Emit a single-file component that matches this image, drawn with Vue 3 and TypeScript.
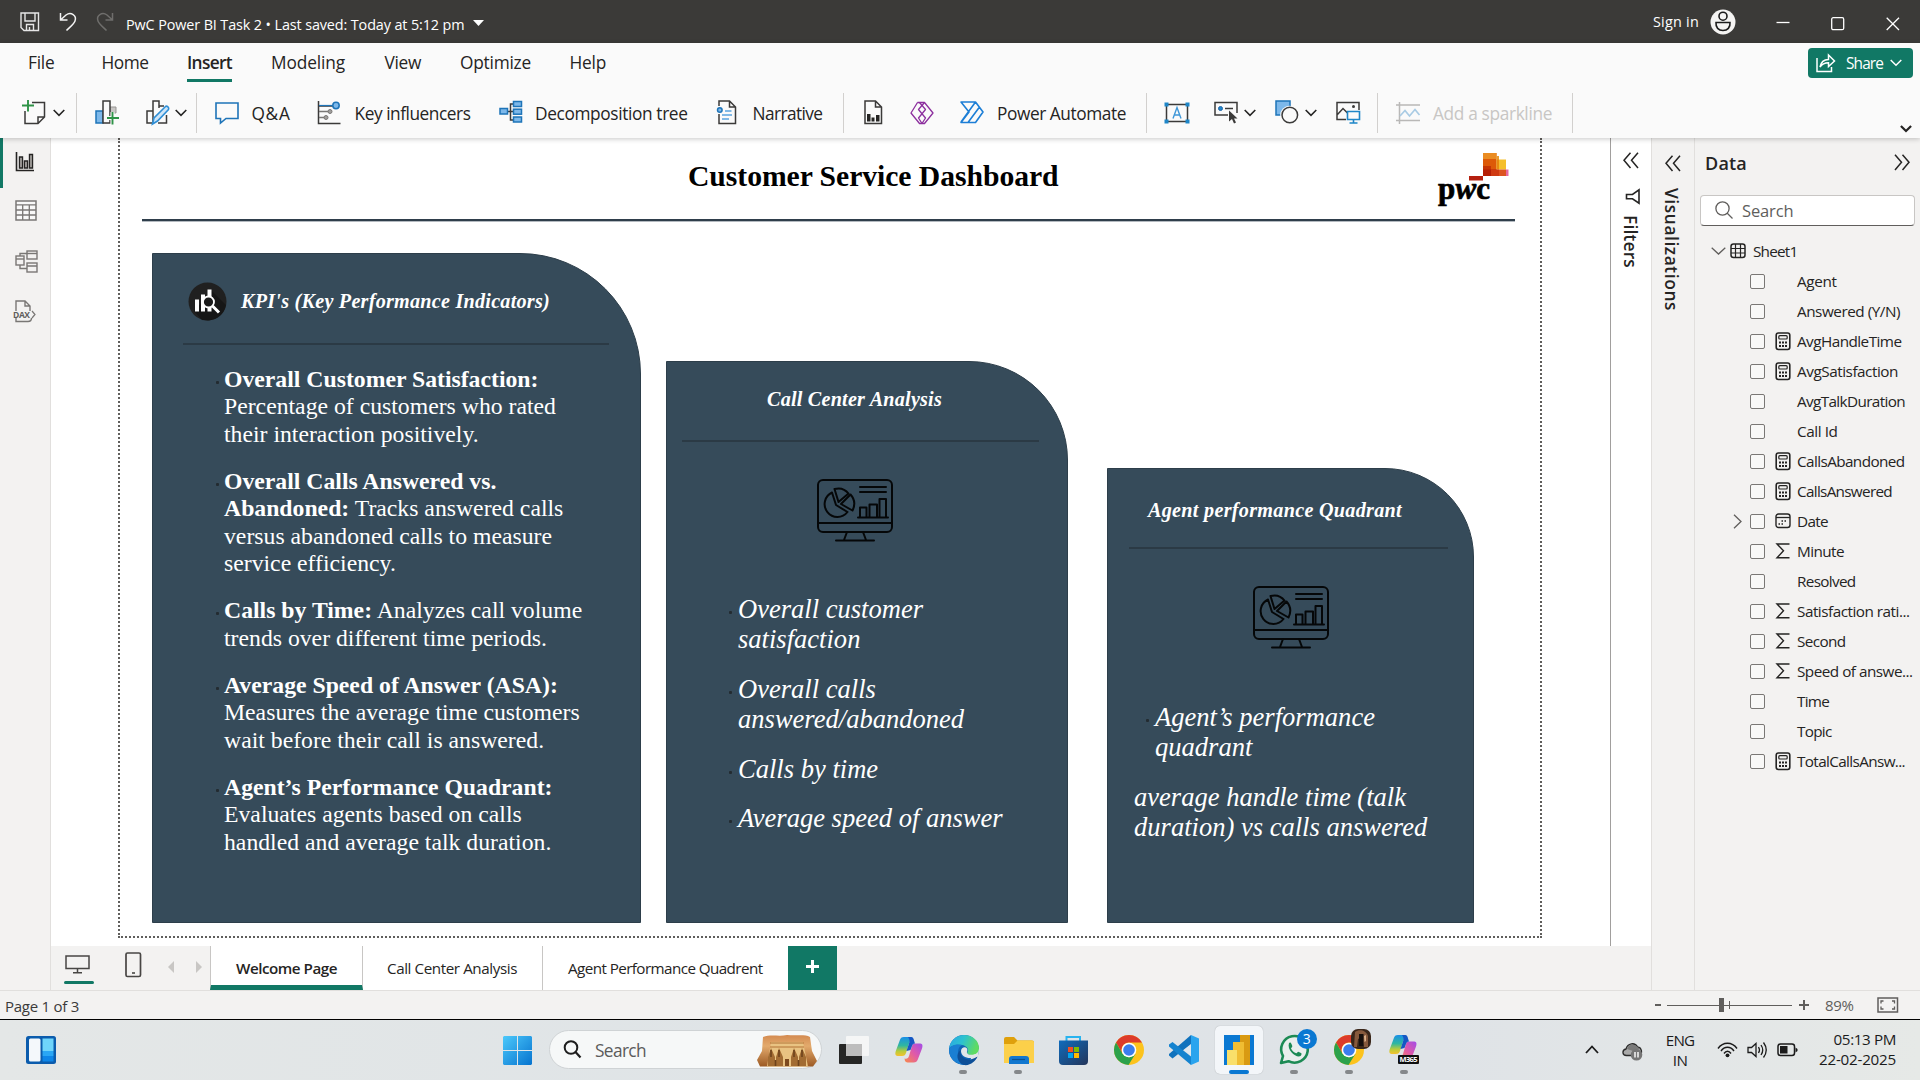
<script setup lang="ts">
import { h } from 'vue'

interface Glyph { w: number; h: number; body: string }
interface Cell { from: number; to: number; icon?: string; text?: string; sep?: boolean; cls?: string }

const line = 'fill="none" stroke="#3b3a39" stroke-width="1.5"'
const blue = 'fill="none" stroke="#1e74b8" stroke-width="1.6"'

const monitor =
  '<g fill="none" stroke="#050708" stroke-width="2" stroke-linecap="round" stroke-linejoin="round"><rect x="1" y="1" width="74" height="52" rx="5"/><path d="M1 44H75M30 53l-3 8M46 53l3 8M19 61.500H57M43 8H69M43 13H69M41 38.500H71M43 38V28.500H49.500V38M52.500 38V25.500H60V38M62.500 38V20H69V38"/><path d="M15 13.500A12.800 12.800 0 1 0 30.500 33L19 26ZM17.500 10C23 8.500 28 10 31.500 14.500L21.500 23ZM33.500 15.500C38 20.500 38 26.500 35.500 31.500L24 25Z"/></g>'

const chrome =
  '<circle cx="15" cy="15" r="15" fill="#fcc31e"/><path d="M2 7.500A15 15 0 0 1 28 7.500H15A7.500 7.500 0 0 0 8.500 18.700Z" fill="#dd3b2b"/><path d="M2 7.500L8.500 18.700 15 22.500 21.500 18.700 14.500 30A15 15 0 0 1 2 7.500Z" fill="#2ba14b"/><circle cx="15" cy="15" r="7.300" fill="#fff"/><circle cx="15" cy="15" r="5.800" fill="#3b7ded"/>'

const copilot =
  '<defs><linearGradient id="cpA" x1="0" y1="0" x2="0" y2="1"><stop offset="0" stop-color="#1a8fe8"/><stop offset=".45" stop-color="#2fb7a0"/><stop offset=".75" stop-color="#b9cc3b"/><stop offset="1" stop-color="#f5c12e"/></linearGradient><linearGradient id="cpB" x1="1" y1="0" x2="0" y2="1"><stop offset="0" stop-color="#a24de8"/><stop offset=".5" stop-color="#e05aa8"/><stop offset="1" stop-color="#f98b4a"/></linearGradient></defs><path d="M18 1.500C17 .3 16 0 14.500 0H9C6.500 0 5.500 1 4.700 3.500L.8 14C-.4 18 .8 19 3.500 19H7C9.500 19 10.300 18 11 16L14 6.500C14.800 4 16 3.500 18.500 4Z" fill="url(#cpA)"/><path d="M10 24C11 25.200 12 25.500 13.500 25.500H18.500C21 25.500 22 24.500 22.800 22.500L27 11.500C28.300 7.500 27 6.500 24.500 6.500H20.500C18 6.500 17.500 7.500 16.800 9.500L14 19C13.200 21.500 12 22 9.500 21.500Z" fill="url(#cpB)"/><path d="M13 0H16C18 0 18.500 1.500 19 3.500L20 6.500C17.800 6.500 17.300 8 16.800 9.500L15.500 13 11.500 14 14 6.500C14.800 4 15 3 13 0Z" fill="#1557c4"/>'

const glyphs: Record<string, Glyph> = {
  save: { w: 20, h: 20, body: '<path d="M1 1H18.500V18.500H4L1 15.500ZM5 1V9H15V1M6.500 18.500V12.500H13.500V18.500M9.500 15V18" fill="none" stroke="#e6e6e6" stroke-width="1.400"/>' },
  undo: { w: 18, h: 20, body: '<path d="M1.500 1V8H8.500M1.500 8L7 3C12 -.5 18 3.500 16 9C15 12 11 15 7.500 18.500" fill="none" stroke="#f3f3f3" stroke-width="1.500"/>' },
  redo: { w: 18, h: 20, body: '<path d="M16.500 1V8H9.500M16.500 8L11 3C6 -.5 0 3.500 2 9C3 12 7 15 10.500 18.500" fill="none" stroke="#6f6e6c" stroke-width="1.500"/>' },
  tri: { w: 12, h: 8, body: '<path d="M0 1H11L5.500 7Z" fill="#fff"/>' },
  avatar: { w: 26, h: 26, body: '<circle cx="13" cy="13" r="12.500" fill="#f5f4f3"/><circle cx="13" cy="7.200" r="4" fill="none" stroke="#1c1c1c" stroke-width="1.600"/><path d="M6 13.500H20C20.500 18.500 17.500 21.500 13 21.500S5.500 18.500 6 13.500Z" fill="none" stroke="#1c1c1c" stroke-width="1.600"/>' },
  min: { w: 14, h: 14, body: '<path d="M.5 5.500H13.500" stroke="#fff" stroke-width="1.300"/>' },
  max: { w: 14, h: 14, body: '<rect x=".7" y=".7" width="12" height="12" rx="1.500" fill="none" stroke="#fff" stroke-width="1.300"/>' },
  close: { w: 14, h: 14, body: '<path d="M.7 .7L13 13M13 .7L.7 13" stroke="#fff" stroke-width="1.300"/>' },
  share: { w: 20, h: 20, body: '<path d="M1 5V18.500H15.500V14M4 14C5 9 8 6.500 12.500 6.500V2L18.500 8 12.500 13.500V9.800C8.500 9.800 6 11 4 14Z" fill="none" stroke="#fff" stroke-width="1.500"/>' },
  chevW: { w: 12, h: 8, body: '<path d="M.7 1L6 6.300 11.300 1" fill="none" stroke="#fff" stroke-width="1.500"/>' },
  chev: { w: 12, h: 8, body: '<path d="M.7 1L6 6.300 11.300 1" fill="none" stroke="#252423" stroke-width="1.600"/>' },
  chevB: { w: 12, h: 8, body: '<path d="M.9 1L6 6 11.100 1" fill="none" stroke="#252423" stroke-width="2.200"/>' },
  newPage: { w: 24, h: 25, body: `<path d="M10 2.500H22.500V17L16 23.500H3V11M16 23.500V17H22.500" ${line}/><path d="M0 5.500H12M6 0V11.500" stroke="#2e9347" stroke-width="1.900"/>` },
  newVisual: { w: 24, h: 25, body: `<rect x="1" y="11" width="7" height="12" fill="#7db8ea" stroke="#1e74b8" stroke-width="1.500"/><path d="M15 7H21V13H15Z" fill="#c8c6c4" stroke="#979593"/><rect x="8" y="1" width="7" height="22" fill="#fafafa" stroke="#3b3a39" stroke-width="1.500"/><path d="M11 18H24M17.500 12V25" stroke="#fafafa" stroke-width="4"/><path d="M12 18H24M17.500 12V24.500" stroke="#2e9347" stroke-width="1.900"/>` },
  editVisual: { w: 24, h: 25, body: `<path d="M7 23H1V11H7V1H13V8M7 11V23M13 6H18M20.500 15V23H12" ${line}/><path d="M6.500 24L8 18 19.500 6.500C21 5.500 23.500 7.500 22.500 9.500L11.500 21Z" fill="#cfe5f7" stroke="#2f8fd6" stroke-width="1.600"/>` },
  qa: { w: 24, h: 23, body: `<path d="M1 2H23V17.500H11L5.500 22V17.500H1Z" ${blue}/>` },
  key: { w: 24, h: 25, body: `<path d="M1.500 1V23.500H23.500M2 6H16" ${line}/><path d="M2 11.500H12M2 17.500H8" stroke="#797775" stroke-width="1.500"/><circle cx="13" cy="11.500" r="2" fill="#a19f9d" stroke="#797775"/><circle cx="9" cy="17.500" r="2" fill="#a19f9d" stroke="#797775"/><path d="M2 5.500H16" stroke="#1e74b8" stroke-width="1.200"/><circle cx="19" cy="5.500" r="3.200" fill="#7db8ea" stroke="#1e74b8" stroke-width="1.500"/>` },
  tree: { w: 24, h: 25, body: '<path d="M8 11.500H14M14 4H11.500V20H14" fill="none" stroke="#3b3a39" stroke-width="1.500"/><g fill="#7db8ea" stroke="#1e74b8" stroke-width="1.500"><rect x="1" y="8.500" width="7.500" height="5.500"/><rect x="14.500" y="1.500" width="8" height="5"/><rect x="14.500" y="9.200" width="8" height="5"/><rect x="14.500" y="17" width="8" height="5"/></g>' },
  narrative: { w: 20, h: 25, body: `<path d="M2 6V1H12.500L18.500 7V23.500H2V14M12.500 1V7H18.500" ${line}/><path d="M8 11H14.500M5 15H15M5 19H12" stroke="#5aa4df" stroke-width="1.500"/><circle cx="2.800" cy="10" r="2.300" fill="#7db8ea" stroke="#1e74b8" stroke-width="1.500"/>` },
  report: { w: 19, h: 25, body: `<path d="M1 1H11.500L17.500 7V23.500H1ZM11.500 1V7H17.500" ${line}/><path d="M3 14H6.500V21.500H3ZM7.500 17.500H10.500V21.500H7.500ZM12 15H15.500V21.500H12Z" fill="#252423"/>` },
  powerApps: { w: 24, h: 24, body: '<g fill="none" stroke="#8c2f9e" stroke-width="1.300" stroke-linejoin="round"><path d="M7.500 1.500H14.500L23 12 14.500 22.500H9.500L1 12 7.500 1.500"/><path d="M9.500 1.500L15.500 8.500 8.500 17 12 22.500M14.500 1.500L8.500 8.500 15.500 17 12 22.500"/></g>' },
  automate: { w: 24, h: 23, body: '<path d="M1 1H15.500L23 11 15.500 21.500H1L9 11ZM15.500 1L1 21M19.500 6L8 21.500M1 1L9 11" fill="none" stroke="#1c7ed6" stroke-width="1.600" stroke-linejoin="round"/>' },
  textbox: { w: 26, h: 22, body: '<rect x="2.500" y="2.500" width="21" height="17" fill="none" stroke="#3b3a39" stroke-width="1.500"/><path d="M9 16.500L13 5.500 17 16.500M10.500 13H15.500" fill="none" stroke="#3f97d8" stroke-width="1.400"/><path d="M.5 .5H4.500V4.500H.5ZM21.500 .5H25.500V4.500H21.500ZM.5 17.500H4.500V21.500H.5ZM21.500 17.500H25.500V21.500H21.500Z" fill="#1e86c8"/>' },
  button: { w: 25, h: 23, body: `<path d="M14 14H1V1.500H23V12" ${line}/><path d="M11 7.500H19" stroke="#3b3a39" stroke-width="1.500"/><circle cx="6.500" cy="7.500" r="2" fill="#1e86c8" stroke="#1e64a8"/><path d="M15 9.500V20.500L18 18 20 22.500 22 21.500 20 17.500H23.500Z" fill="#3b3a39"/>` },
  shapes: { w: 24, h: 25, body: '<rect x="1" y="1" width="14" height="14" fill="#7db8ea" stroke="#1e74b8" stroke-width="1.500"/><circle cx="14.500" cy="15" r="9.300" fill="#fafafa"/><circle cx="14.800" cy="15" r="7.800" fill="#fafafa" stroke="#3b3a39" stroke-width="1.500"/>' },
  image: { w: 25, h: 23, body: `<path d="M10 18.500H1V1.500H23V9M1 14L7 7.500 11.500 12" ${line}/><circle cx="17.500" cy="5.500" r="1.500" fill="#3b3a39"/><path d="M11.500 10.500H23.500V18.500H11.500ZM17.500 18.500V22M13.500 22H21.500" fill="#fafafa" stroke="#1e86c8" stroke-width="1.600"/>` },
  spark: { w: 24, h: 22, body: '<path d="M0 3H24M0 18.500H24M3.500 0V22" stroke="#b9b8b7" stroke-width="1.500"/><path d="M4 14L9 8.500 13.500 14 19 7.500 23.500 13" fill="none" stroke="#a9cbe4" stroke-width="1.700"/>' },
  railReport: { w: 20, h: 20, body: '<path d="M1.500 0V18.500H19" fill="none" stroke="#252423" stroke-width="1.600"/><path d="M4.500 5H7.500V16H4.500ZM9.500 9H12.500V16H9.500ZM14.500 2.500H17.500V16H14.500Z" fill="#b3b0ad" stroke="#252423" stroke-width="1.400"/>' },
  railTable: { w: 22, h: 21, body: '<rect x="1" y="1" width="20" height="19" fill="#f8f8f8" stroke="#797775" stroke-width="1.500"/><path d="M1 4.800H21M1 10H21M1 15H21M7.700 5V20M14.300 5V20" stroke="#797775" stroke-width="1.300"/>' },
  railModel: { w: 23, h: 23, body: '<g fill="none" stroke="#797775" stroke-width="1.400"><rect x="12" y="1" width="10" height="8"/><path d="M12 3.500H22"/><rect x="1" y="6" width="8" height="9"/><path d="M1 9H9"/><rect x="12" y="13" width="10" height="9"/><path d="M12 16H22M5 6V3.500H12M5 15V18.500H12"/></g>' },
  railDax: { w: 24, h: 23, body: '<path d="M3 11V1H12L17 6V11M12 1V6H17M3 18V21.500H15C17.500 21.500 18.500 20 18.500 18" fill="none" stroke="#797775" stroke-width="1.400"/><text x="0" y="17.500" font-family="Open Sans,sans-serif" font-size="8.500" font-weight="700" fill="#605e5c" textLength="17">DAX</text><path d="M19 11L22 14.500 19 18" fill="none" stroke="#797775" stroke-width="1.200"/>' },
  kpi: { w: 39, h: 39, body: '<circle cx="19.500" cy="19.500" r="19" fill="#202020"/><path d="M6 29L24 9 38 23A19 19 0 0 1 21 38.500L14 38Z" fill="#161616"/><path d="M7 17.500H11V29.500H7ZM13 12.500H17V29.500H13ZM19.500 7.500H23.500V29.500H19.500Z" fill="#fff"/><circle cx="20.500" cy="20" r="5.500" fill="#1a1a1a" stroke="#fff" stroke-width="1.800"/><path d="M24.500 24L31 30.500" stroke="#fff" stroke-width="3"/>' },
  monitor: { w: 76, h: 63, body: monitor },
  dblL: { w: 16, h: 17, body: '<path d="M7.500 .8L1 8.300 7.500 16M15 .8L8.500 8.300 15 16" fill="none" stroke="#252423" stroke-width="1.500"/>' },
  dblR: { w: 16, h: 17, body: '<path d="M1 .8L7.500 8.300 1 16M8.500 .8L15 8.300 8.500 16" fill="none" stroke="#252423" stroke-width="1.500"/>' },
  funnel: { w: 15, h: 15, body: '<path d="M14 .8V14.200L7.500 9.800H1.500V5.500H7.500Z" fill="none" stroke="#252423" stroke-width="1.600"/>' },
  search: { w: 18, h: 18, body: '<circle cx="7.500" cy="7.500" r="6.600" fill="none" stroke="#605e5c" stroke-width="1.300"/><path d="M12 12L17.500 17.500" stroke="#605e5c" stroke-width="1.300"/>' },
  caretD: { w: 15, h: 8, body: '<path d="M.7 .8L7.500 7 14.300 .8" fill="none" stroke="#605e5c" stroke-width="1.300"/>' },
  caretR: { w: 9, h: 15, body: '<path d="M1 .7L8 7.500 1 14.300" fill="none" stroke="#605e5c" stroke-width="1.300"/>' },
  sheet: { w: 16, h: 16, body: '<rect x="1" y="1" width="14" height="13.500" rx="2.500" fill="none" stroke="#252423" stroke-width="1.500"/><path d="M5.500 1V14.500M10.500 1V14.500M1 5.500H15M1 10H15" stroke="#252423" stroke-width="1.200"/>' },
  calc: { w: 16, h: 19, body: '<rect x="1.200" y="1" width="13.600" height="16.500" rx="2.200" fill="none" stroke="#252423" stroke-width="1.600"/><rect x="3.800" y="3.700" width="8.400" height="3.300" rx="1" fill="none" stroke="#252423" stroke-width="1.200"/><path d="M4 10.500H6M7 10.500H9M10 10.500H12M4 14H6M7 14H9M10 14H12" stroke="#252423" stroke-width="2"/>' },
  cal: { w: 16, h: 16, body: '<rect x="1" y="1" width="14" height="13.500" rx="2.500" fill="none" stroke="#252423" stroke-width="1.400"/><path d="M1 4.500H15" stroke="#252423" stroke-width="1.300"/><path d="M6.500 8H8M9.500 8H11M3.500 11H5M6.500 11H8" stroke="#252423" stroke-width="1.500"/>' },
  sigma: { w: 16, h: 16, body: '<path d="M14.500 1H2L8.500 7.800 2 14.800H14.500" fill="none" stroke="#252423" stroke-width="1.400"/>' },
  desktop: { w: 25, h: 19, body: '<path d="M1 1H24V13.500H1ZM12.500 13.500V17.500M8 17.700H17" fill="none" stroke="#484644" stroke-width="1.500"/>' },
  phone: { w: 17, h: 26, body: '<rect x="1" y="1" width="14.500" height="23.500" rx="1.500" fill="none" stroke="#484644" stroke-width="1.700"/><path d="M7 21H10" stroke="#484644" stroke-width="1.600"/>' },
  left: { w: 6, h: 12, body: '<path d="M6 0V12L0 6Z" fill="#c8c6c4"/>' },
  right: { w: 6, h: 12, body: '<path d="M0 0V12L6 6Z" fill="#c8c6c4"/>' },
  fitPage: { w: 22, h: 16, body: '<rect x="1" y="1" width="19.500" height="14" fill="none" stroke="#605e5c" stroke-width="1.500"/><path d="M4 6.500V4H6.500M15 4H17.500V6.500M17.500 9.500V12H15M6.500 12H4V9.500" fill="none" stroke="#605e5c" stroke-width="1.300"/>' },
  widgets: { w: 30, h: 28, body: '<rect width="30" height="28" rx="2.500" fill="#0b5cad"/><rect x="3" y="2.500" width="11.500" height="23" rx="1.500" fill="#f4f8fb"/><rect x="16.500" y="2.500" width="11" height="12.500" fill="#6fd5fb"/><rect x="16.500" y="15" width="11" height="5" fill="#2aa7f5"/><rect x="16.500" y="20" width="11" height="5.500" fill="#0e86e8"/>' },
  windows: { w: 29, h: 29, body: '<defs><linearGradient id="wn" x1="0" y1="0" x2="1" y2="1"><stop offset="0" stop-color="#4cc9fb"/><stop offset="1" stop-color="#0673cf"/></linearGradient></defs><path d="M1 0H14V14H0V1ZM15 0H28L29 1V14H15ZM0 15H14V29H1L0 28ZM15 15H29V28L28 29H15Z" fill="url(#wn)"/>' },
  taskSearch: { w: 19, h: 19, body: '<circle cx="8" cy="7.500" r="6.300" fill="none" stroke="#1e1e1e" stroke-width="2"/><path d="M12.500 12L17.500 17.500" stroke="#1e1e1e" stroke-width="2.200"/>' },
  temple: { w: 60, h: 32, body: '<defs><linearGradient id="tm" x1="0" y1="0" x2="0" y2="1"><stop offset="0" stop-color="#d38a50"/><stop offset=".35" stop-color="#e3aa6c"/><stop offset="1" stop-color="#9c5a24"/></linearGradient></defs><path d="M6 2C14-1 22 2 30 0 40 1 48-1 53 2L55 16 60 26 56 31.500H3L0 25 5 16Z" fill="url(#tm)"/><path d="M14 7H46L51 31.500H10Z" fill="#e9c382"/><path d="M13 8H47M13 12H47" stroke="#b27337" stroke-width="1"/><path d="M11 31V22L14 13 18 22V31ZM19 31V22L22 13 26 22V31ZM34 31V22L37 13 41 22V31ZM42 31V22L45 13 49 22V31Z" fill="#a26c33"/><path d="M14 15V22M22 15V22M37 15V22M45 15V22M18.500 25V31M41.500 25V31" stroke="#6d431c" stroke-width="1.600"/><path d="M28 24H32V31H28Z" fill="#7d4a1e"/>' },
  taskView: { w: 30, h: 28, body: '<rect y="8" width="23" height="20" rx="1" fill="#262625"/><rect x="7" width="23" height="20" rx="1" fill="#f7f7f7" opacity=".9"/><path d="M7 8H23V20H7Z" fill="#bdbdbd"/>' },
  copilot: { w: 28, h: 26, body: copilot },
  edge: { w: 30, h: 30, body: '<defs><linearGradient id="eg" x1="0" y1="0" x2="1" y2=".3"><stop offset="0" stop-color="#2aa5e6"/><stop offset=".5" stop-color="#2dc2cf"/><stop offset="1" stop-color="#5fdb62"/></linearGradient></defs><circle cx="15" cy="15" r="15" fill="#0f64b5"/><path d="M15 30C22 31 27 26 29.500 20.500L30 14 24 16 20 30Z" fill="#e1e5e9"/><path d="M0 14C1 5 8 0 15 0 24 0 30 6 30 13C30 17.500 26.500 20 22.500 20 19 20 17.500 18.500 18.500 17 20 14 17.500 10.500 13 10 7 9 1 11 0 14Z" fill="url(#eg)"/><path d="M0 14C3 9 9 9 13 10 9 12 8 17 10 22 12 26 17 29 21 28.500A15 15 0 0 1 0 14Z" fill="#1a7fd3"/><path d="M12 15C10 20 15 25 21 24.500 24 24.500 27 22 28.500 21.500 27 26 21 31 15 30 8 28 6 18 12 15Z" fill="#0d4f98"/><path d="M12 16C12 13 16 11 18 13.500 19 15.500 17.500 16.500 18 18 19 20 23 20.300 26 19.300L28.500 18.500 28.800 21C22 25 12 23 12 16Z" fill="#e1e5e9"/>' },
  folder: { w: 30, h: 27, body: '<path d="M0 2Q0 0 2 0H10L13.500 3.500H28Q30 3.500 30 5.500V10H0Z" fill="#dfa00c"/><path d="M0 7H10L13.500 3.500H28Q30 3.500 30 5.500V26H0Z" fill="#fcd04a"/><path d="M5 27V22Q5 19 8 19H22Q25 19 25 22V27Z" fill="#1277cf"/><path d="M8 22.500H21" stroke="#0b508f" stroke-width="1.200"/>' },
  store: { w: 29, h: 29, body: '<defs><linearGradient id="st" x1="0" y1="0" x2="1" y2="1"><stop offset="0" stop-color="#0f6cbd"/><stop offset="1" stop-color="#24355a"/></linearGradient></defs><path d="M7.500 6V1H21V6" fill="none" stroke="#28b3ef" stroke-width="2"/><path d="M0 4.500H29V25Q29 29 25 29H4Q0 29 0 25Z" fill="url(#st)"/><path d="M9 11H14V16H9Z" fill="#f25022"/><path d="M15 11H20V16H15Z" fill="#7fba00"/><path d="M9 17H14V22H9Z" fill="#00a4ef"/><path d="M15 17H20V22H15Z" fill="#ffb900"/>' },
  chrome: { w: 30, h: 30, body: chrome },
  vscode: { w: 30, h: 30, body: '<path d="M22 0L30 3.500V26.500L22 30Z" fill="#2aa4ee"/><path d="M22 0V9L3.500 23.500 0 20.500V19Z" fill="#1072bd"/><path d="M22 30V21.500L3.500 7 0 9.500V11.500Z" fill="#1583cf"/><path d="M22 9.500L15 15 22 20.500Z" fill="#dfe7ee"/>' },
  powerbi: { w: 30, h: 30, body: '<rect width="30" height="30" fill="#0a78d2"/><path d="M16 0H26V30H16Z" fill="#d99a12"/><path d="M9 7H20V30H9Z" fill="#f0bd32"/><path d="M3 15H13V30H3Z" fill="#f9df6a"/>' },
  whatsapp: { w: 30, h: 30, body: '<path d="M2 28L4 21A13.300 13.300 0 1 1 9.500 26.200Z" fill="#e9eeec" stroke="#1c8a54" stroke-width="2.600" stroke-linejoin="round"/><path d="M10 8C11 7 12 7.500 12.500 9L13.300 11C13.500 12 12 13 12 13.500 13 15.800 15 17.500 17.200 18.300 18 18.500 18.500 16.800 19.300 16.700L22 18C23 18.600 22.500 20 21.500 21 18 23.500 7.500 16 10 8Z" fill="#1c8a54"/>' },
  photo: { w: 20, h: 20, body: '<rect width="20" height="20" rx="7" fill="#3a271b"/><path d="M4 3C8 0 15 1 17 7V18H13L11 8 7 10 6 18H3Z" fill="#86593c"/><path d="M8 5H12.500V17H8Z" fill="#17100d"/><path d="M13 7L15 6V12L13.500 13Z" fill="#ddb189"/>' },
  m365: { w: 30, h: 30, body: copilot + '<rect x="9" y="20" width="21" height="9" rx="1" fill="#101010"/><text x="10.500" y="27.300" font-family="Open Sans,sans-serif" font-weight="700" font-size="7.500" fill="#fff" textLength="18">M365</text>' },
  up: { w: 14, h: 9, body: '<path d="M1 8L7 1.500 13 8" fill="none" stroke="#1b1b1b" stroke-width="1.800"/>' },
  cloud: { w: 21, h: 19, body: '<path d="M4.500 13.500C0 13.500-.3 8 4 7 5.500 1 13 0 15.500 5 20 5.500 21 12 17 13.500Z" fill="#a9a9a9" stroke="#2c2c2c" stroke-width="1.300"/><path d="M5 7C6 2 12 1 15.500 5L18 7 11 9Z" fill="#7a7a7a"/><circle cx="14.500" cy="12.800" r="5.800" fill="#757575"/><path d="M13 10V15.500M16 10V15.500" stroke="#fff" stroke-width="1.400"/>' },
  wifi: { w: 21, h: 16, body: '<g fill="none" stroke="#1b1b1b" stroke-width="1.400"><path d="M1 6.500C6-.5 15-.5 20 6.500M4 9C7.500 4 13.500 4 17 9M7 11.500C9 8.500 12 8.500 14 11.500"/></g><circle cx="10.500" cy="13.300" r="1.900" fill="#1b1b1b"/>' },
  sound: { w: 21, h: 18, body: '<path d="M1 6.500H4.500L9 2.500V15.500L4.500 11.500H1ZM11.500 6Q13.500 9 11.500 12M14 4Q17.500 9 14 14M16.500 1.500Q22 9 16.500 16.500" fill="none" stroke="#1b1b1b" stroke-width="1.300"/>' },
  battery: { w: 21, h: 14, body: '<rect x="1" y="1" width="16.500" height="11.500" rx="2.500" fill="none" stroke="#1b1b1b" stroke-width="1.500"/><rect x="3" y="3" width="7.500" height="7.500" fill="#1b1b1b"/><path d="M18.500 4.500L20.500 6V8L18.500 9.500Z" fill="#1b1b1b"/>' },
}

const Ico = (p: { n: string }) => {
  const g = glyphs[p.n]
  return h('svg', { width: g.w, height: g.h, viewBox: `0 0 ${g.w} ${g.h}`, innerHTML: g.body, style: 'display:block;flex:none;overflow:visible' })
}
Ico.props = ['n']

/* Tracks a label so that it takes exactly the given length. */
const vFit = {
  mounted(el: HTMLElement, b: { value: number; modifiers: { down?: boolean } }) {
    const n = (el.textContent ?? '').trim().length
    const range = document.createRange()
    range.selectNodeContents(el)
    const r = range.getBoundingClientRect()
    el.style.letterSpacing = `${(b.value - (b.modifiers.down ? r.height : r.width)) / n}px`
  },
}

/* Turns the extents of a row's cells into the gap before each and its width. */
const spread = (cells: Cell[], start = 0) => {
  let at = start
  return cells.map((c) => {
    const gap = c.from - at
    at = c.to
    return { ...c, w: c.to - c.from, box: { marginLeft: `${gap}px`, width: `${c.to - c.from}px` } }
  })
}

const menu = spread([
  { from: 28, to: 54.5, text: 'File' },
  { from: 101.5, to: 148.5, text: 'Home' },
  { from: 187, to: 232, text: 'Insert', cls: 'on' },
  { from: 271, to: 345, text: 'Modeling' },
  { from: 384.5, to: 421, text: 'View' },
  { from: 460, to: 531, text: 'Optimize' },
  { from: 569.5, to: 606, text: 'Help' },
])

const ribbon = spread([
  { from: 22, to: 46, icon: 'newPage' }, { from: 53, to: 65, icon: 'chev' }, { from: 76, to: 77, sep: true },
  { from: 95, to: 119, icon: 'newVisual' }, { from: 146, to: 170, icon: 'editVisual' }, { from: 175, to: 187, icon: 'chev' },
  { from: 196, to: 197, sep: true },
  { from: 215, to: 239, icon: 'qa' }, { from: 251.5, to: 290.5, text: 'Q&A' },
  { from: 317, to: 341, icon: 'key' }, { from: 354.5, to: 470.5, text: 'Key influencers' },
  { from: 499, to: 523, icon: 'tree' }, { from: 535, to: 687.5, text: 'Decomposition tree' },
  { from: 717, to: 737, icon: 'narrative' }, { from: 752.5, to: 822.5, text: 'Narrative' },
  { from: 843, to: 844, sep: true },
  { from: 864, to: 883, icon: 'report' }, { from: 910, to: 934, icon: 'powerApps' },
  { from: 960, to: 984, icon: 'automate' }, { from: 997, to: 1126, text: 'Power Automate' },
  { from: 1146, to: 1147, sep: true },
  { from: 1163.5, to: 1189.5, icon: 'textbox' }, { from: 1214, to: 1239, icon: 'button' }, { from: 1244, to: 1256, icon: 'chev' },
  { from: 1275, to: 1299, icon: 'shapes' }, { from: 1305, to: 1317, icon: 'chev' }, { from: 1336, to: 1361, icon: 'image' },
  { from: 1377, to: 1378, sep: true },
  { from: 1396, to: 1420, icon: 'spark' }, { from: 1433, to: 1552, text: 'Add a sparkline', cls: 'dim' },
  { from: 1572, to: 1573, sep: true }, { from: 1900, to: 1912, icon: 'chevB', cls: 'low' },
])

const kpiItems: string[][][] = [
  [['Overall Customer Satisfaction:'], ['', 'Percentage of customers who rated'], ['', 'their interaction positively.']],
  [['Overall Calls Answered vs.'], ['Abandoned:', ' Tracks answered calls'], ['', 'versus abandoned calls to measure'], ['', 'service efficiency.']],
  [['Calls by Time:', ' Analyzes call volume'], ['', 'trends over different time periods.']],
  [['Average Speed of Answer (ASA):'], ['', 'Measures the average time customers'], ['', 'wait before their call is answered.']],
  [['Agent’s Performance Quadrant:'], ['', 'Evaluates agents based on calls'], ['', 'handled and average talk duration.']],
]
const callItems = [['Overall customer', 'satisfaction'], ['Overall calls', 'answered/abandoned'], ['Calls by time'], ['Average speed of answer']]

const fields: { name: string; w: number; icon?: string; open?: boolean }[] = [
  { name: 'Agent', w: 39.5 }, { name: 'Answered (Y/N)', w: 103 }, { name: 'AvgHandleTime', w: 104.5, icon: 'calc' },
  { name: 'AvgSatisfaction', w: 101, icon: 'calc' }, { name: 'AvgTalkDuration', w: 108 }, { name: 'Call Id', w: 40.5 },
  { name: 'CallsAbandoned', w: 107.5, icon: 'calc' }, { name: 'CallsAnswered', w: 95, icon: 'calc' },
  { name: 'Date', w: 31, icon: 'cal', open: true }, { name: 'Minute', w: 47, icon: 'sigma' }, { name: 'Resolved', w: 58.5 },
  { name: 'Satisfaction rati...', w: 112.5, icon: 'sigma' }, { name: 'Second', w: 48.5, icon: 'sigma' },
  { name: 'Speed of answe...', w: 115.5, icon: 'sigma' }, { name: 'Time', w: 32 }, { name: 'Topic', w: 34.5 },
  { name: 'TotalCallsAnsw...', w: 108, icon: 'calc' },
]

const apps: { icon: string; run?: string; badge?: string; face?: boolean }[] = [
  { icon: 'taskView' }, { icon: 'copilot' }, { icon: 'edge', run: 'idle' }, { icon: 'folder', run: 'idle' }, { icon: 'store' },
  { icon: 'chrome' }, { icon: 'vscode' }, { icon: 'powerbi', run: 'front' }, { icon: 'whatsapp', run: 'idle', badge: '3' },
  { icon: 'chrome', run: 'idle', face: true }, { icon: 'm365', run: 'idle' },
]
</script>

<template>
  <div class="screen">
    <header class="titlebar">
      <Ico n="save" class="t-save" /><Ico n="undo" class="t-undo" /><Ico n="redo" class="t-redo" />
      <span class="doc" v-fit="338.5">PwC Power BI Task 2 • Last saved: Today at 5:12 pm</span>
      <Ico n="tri" class="t-tri" />
      <div class="account"><span v-fit="46">Sign in</span><Ico n="avatar" /></div>
      <div class="win"><Ico n="min" /><Ico n="max" /><Ico n="close" /></div>
    </header>

    <section class="top">
      <nav class="menu">
        <span v-for="m in menu" :key="m.text" class="tab" :class="m.cls" :style="m.box"><span v-fit="m.w">{{ m.text }}</span></span>
        <button class="share"><Ico n="share" /><span v-fit="37">Share</span><Ico n="chevW" /></button>
      </nav>
      <div class="ribbon">
        <div v-for="(c, i) in ribbon" :key="i" class="cell" :class="[c.cls, { sep: c.sep, lbl: c.text }]" :style="c.box">
          <Ico v-if="c.icon" :n="c.icon" /><span v-else-if="c.text" v-fit="c.w">{{ c.text }}</span>
        </div>
      </div>
    </section>

    <main class="work">
      <aside class="rail">
        <div class="slot on"><Ico n="railReport" /></div>
        <div class="slot"><Ico n="railTable" /></div>
        <div class="slot"><Ico n="railModel" /></div>
        <div class="slot dax"><Ico n="railDax" /></div>
      </aside>

      <div class="center">
        <div class="upper">
          <div class="canvas">
            <div class="page">
              <div class="head">
                <h1><span v-fit="370.5">Customer Service Dashboard</span></h1>
                <div class="logo">
                  <svg width="41" height="28" viewBox="0 0 41 28">
                    <path d="M0 23H14V27.500H0Z" fill="#b5200f" /><path d="M14 0H27.500V23H14Z" fill="#dd5a08" />
                    <path d="M14 0H27.500V6H14Z" fill="#ea8c22" /><path d="M27.500 3H30V16.500H27.500Z" fill="#eb9b2f" />
                    <path d="M30 6.500H37V16.500H30Z" fill="#f5bf2b" /><path d="M27.500 6.500H30V16.500H27.500Z" fill="#e88a10" />
                    <path d="M14 13H22V23H14Z" fill="#c53505" /><path d="M14 16.500H27.500V23H14Z" fill="#b51e05" />
                    <path d="M22 16.500H30V23H22Z" fill="#cf3a12" /><path d="M30 16.500H37V23H30Z" fill="#dc5320" />
                    <path d="M37 16.500H39.500V23H37Z" fill="#e668a0" />
                  </svg>
                  <span class="word">p<i>w</i>c</span>
                </div>
              </div>
              <div class="rule"></div>
              <div class="cards">
                <article class="card c1">
                  <div class="chead"><Ico n="kpi" /><span v-fit="309">KPI's (Key Performance Indicators)</span></div>
                  <div class="crule"></div>
                  <ul class="body">
                    <li v-for="(it, i) in kpiItems" :key="i">
                      <div v-for="(l, j) in it" :key="j" class="ln"><b>{{ l[0] }}</b>{{ l[1] }}</div>
                    </li>
                  </ul>
                </article>
                <article class="card c2">
                  <div class="chead"><span v-fit="175">Call Center Analysis</span></div>
                  <div class="crule"></div>
                  <Ico n="monitor" class="mon" />
                  <ul class="body it">
                    <li v-for="(it, i) in callItems" :key="i"><div v-for="l in it" :key="l" class="ln">{{ l }}</div></li>
                  </ul>
                </article>
                <article class="card c3">
                  <div class="chead"><span v-fit="254">Agent performance Quadrant</span></div>
                  <div class="crule"></div>
                  <Ico n="monitor" class="mon" />
                  <ul class="body it">
                    <li><div class="ln">Agent’s performance</div><div class="ln">quadrant</div></li>
                  </ul>
                  <div class="para"><div class="ln">average handle time (talk</div><div class="ln">duration) vs calls answered</div></div>
                </article>
              </div>
            </div>
          </div>
          <aside class="filters"><Ico n="dblL" /><Ico n="funnel" class="fun" /><span class="vert" v-fit.down="53">Filters</span></aside>
        </div>
        <footer class="tabs">
          <div class="mode"><Ico n="desktop" /><i class="bar"></i></div>
          <Ico n="phone" class="ph" /><Ico n="left" class="la" /><Ico n="right" class="ra" />
          <div class="pg p1"><span v-fit="101">Welcome Page</span></div>
          <div class="pg p2"><span v-fit="130">Call Center Analysis</span></div>
          <div class="pg p3"><span v-fit="194.5">Agent Performance Quadrent</span></div>
          <div class="add"></div>
        </footer>
      </div>

      <aside class="viz"><Ico n="dblL" /><span class="vert" v-fit.down="123">Visualizations</span></aside>

      <aside class="data">
        <div class="dhead"><b v-fit="42">Data</b><Ico n="dblR" /></div>
        <div class="find"><Ico n="search" /><span v-fit="51.5">Search</span></div>
        <div class="row root"><Ico n="caretD" /><Ico n="sheet" /><span v-fit="44.500">Sheet1</span></div>
        <div v-for="f in fields" :key="f.name" class="row">
          <div class="exp"><Ico v-if="f.open" n="caretR" /></div>
          <i class="box"></i>
          <div class="kind"><Ico v-if="f.icon" :n="f.icon" /></div>
          <span v-fit="f.w">{{ f.name }}</span>
        </div>
      </aside>
    </main>

    <div class="status">
      <span class="count" v-fit="74">Page 1 of 3</span>
      <div class="zoom">
        <i class="minus"></i>
        <div class="track"><i class="thumb"></i><i class="tick"></i></div>
        <i class="plus"></i>
        <span v-fit="28.500">89%</span><Ico n="fitPage" />
      </div>
    </div>

    <div class="taskbar">
      <Ico n="widgets" class="wid" /><Ico n="windows" class="start" />
      <div class="pill"><Ico n="taskSearch" /><span v-fit="51">Search</span><Ico n="temple" class="tem" /></div>
      <div class="apps">
        <div v-for="(a, i) in apps" :key="i" class="app" :class="a.run">
          <Ico :n="a.icon" />
          <span v-if="a.badge" class="badge">{{ a.badge }}</span>
          <Ico v-if="a.face" n="photo" class="face" />
        </div>
      </div>
      <div class="tray">
        <Ico n="up" /><Ico n="cloud" class="cl" />
        <div class="lang"><span v-fit="28.500">ENG</span><span v-fit="14.500">IN</span></div>
        <Ico n="wifi" class="wf" /><Ico n="sound" class="sd" /><Ico n="battery" class="bt" />
        <div class="clock"><span v-fit="62.500">05:13 PM</span><span v-fit="77">22-02-2025</span></div>
      </div>
    </div>
  </div>
</template>

<style>
body { margin: 0; overflow: hidden; }
</style>

<style scoped>
* { box-sizing: border-box; }
.screen { width: 1920px; height: 1080px; display: flex; flex-direction: column; background: #fff; color: #252423; font-family: "Open Sans", "Noto Sans", sans-serif; overflow: hidden; }
span, b { white-space: nowrap; }
i { font-style: normal; }

.titlebar { height: 43px; background: #3b3a38; color: #fff; display: flex; font-size: 14.400px; flex: none; }
.t-save { margin: 12px 0 0 20px; }
.t-undo { margin: 12px 0 0 19px; }
.t-redo { margin: 12px 0 0 19px; }
.doc { align-self: flex-start; line-height: 20px; margin: 15px 0 0 12px; flex: none; }
.t-tri { margin: 19px 0 0 8px; }
.account { margin-left: auto; display: flex; align-items: center; gap: 11px; height: 43px; }
.account span { display: block; width: 46px; }
.win { display: flex; gap: 41px; margin: 17px 20px 0 40px; }

.top { height: 95px; background: #fafafa; flex: none; position: relative; box-shadow: 0 1px 5px rgba(0, 0, 0, .22); z-index: 2; font-size: 17.300px; }
.menu { height: 42px; display: flex; align-items: flex-start; }
.tab { display: block; height: 39px; line-height: 39px; flex: none; }
.on.tab { font-weight: 600; border-bottom: 3px solid #117865; }
.share { margin: 5px 7px 0 auto; width: 105px; height: 30px; border: 0; border-radius: 4px; background: #117865; color: #fff; display: flex; align-items: center; padding: 0 8px; font: 15.400px "Open Sans", sans-serif; }
.share span { width: 38px; margin: 0 6px 0 10px; flex: none; text-align: left; }
.ribbon { height: 53px; display: flex; align-items: center; }
.cell { flex: none; height: 25px; display: flex; align-items: center; margin-top: 2px; }
.cell.lbl { line-height: 25px; margin-top: 4px; }
.cell.sep { height: 40px; background: #d2d0ce; margin-top: 3px; }
.cell.dim { color: #c8c6c4; }
.cell.low { margin-top: 34px; }

.work { height: 852px; display: flex; flex: none; }
.rail { width: 51px; background: #f3f2f1; border-right: 1px solid #e1dfdd; flex: none; }
.slot { height: 50px; display: flex; align-items: center; padding-left: 15px; }
.slot.on { border-left: 3px solid #117865; padding-left: 12px; padding-bottom: 3px; }
.slot.dax { padding-left: 13px; }
.slot:nth-child(2) { height: 45px; }
.slot:nth-child(3) { height: 56px; }
.slot:nth-child(4) { height: 44px; }

.center { width: 1600px; flex: none; display: flex; flex-direction: column; }
.upper { height: 808px; display: flex; }
.canvas { width: 1559px; padding-left: 67px; flex: none; }
.page { width: 1424px; height: 800px; border: dotted #605e5c; border-width: 0 2px 2px; font-family: "Liberation Serif", "Times New Roman", serif; }
.head { height: 81px; display: flex; color: #000; }
h1 { margin: 21px 0 0 568px; font-size: 29.660px; line-height: 34px; font-weight: 700; }
.logo { margin: 15px 31px 0 auto; width: 71px; height: 60px; display: flex; flex-direction: column; }
.logo svg { margin-left: 31px; flex: none; }
.word { font-size: 31px; font-weight: 700; line-height: 24px; margin-top: -4px; letter-spacing: .2px; -webkit-text-stroke: .7px #000; }
.word i { font-style: italic; }
.rule { width: 1373px; height: 3px; margin-left: 22px; background: #2f3e4b; border-bottom: 1px solid #b4bac0; }
.cards { height: 701px; display: flex; align-items: flex-end; padding-left: 32px; }
.card { background: #364b5a; border: 1px solid #2d3e4a; color: #fff; flex: none; }
.c1 { width: 489px; height: 670px; border-top-right-radius: 121px; }
.c2 { width: 402px; height: 562px; border-top-right-radius: 99px; margin-left: 25px; }
.c3 { width: 367px; height: 455px; border-top-right-radius: 89px; margin-left: 39px; }
.chead { font-size: 20.170px; line-height: 24px; font-weight: 700; font-style: italic; display: flex; }
.c1 .chead { height: 89px; padding: 28px 0 0 35px; }
.c1 .chead span { margin: 7px 0 0 14px; }
.c2 .chead { height: 78px; padding: 25px 0 0 100px; }
.c3 .chead { height: 78px; padding: 29px 0 0 40px; }
.crule { height: 2px; background: #2b3a45; }
.c1 .crule { width: 426px; margin-left: 30px; }
.c2 .crule { width: 357px; margin-left: 15px; }
.c3 .crule { width: 319px; margin-left: 21px; }
.mon { margin: 37px 0 0 150px; }
.c3 .mon { margin: 37px 0 0 145px; }
.body { list-style: none; margin: 0; padding: 0; }
.c1 .body { margin: 21px 0 0 71px; font-size: 23.730px; line-height: 27.400px; }
.it { font-size: 26.550px; line-height: 30px; font-style: italic; }
.c2 .it { margin: 52px 0 0 71px; }
.c3 .it { margin: 53px 0 0 47px; }
.para { font-size: 26.550px; line-height: 30px; font-style: italic; margin: 20px 0 0 26px; }
li { margin-bottom: 19.800px; position: relative; }
li::before { content: ""; position: absolute; left: -8px; top: 15px; width: 3px; height: 3px; border-radius: 1px; background: #232b31; }
.it li::before { top: 17px; left: -9px; }
.ln { white-space: pre; }

.filters { width: 41px; border-left: 1px solid #a19f9d; display: flex; flex-direction: column; align-items: flex-start; padding: 14px 0 0 12px; background: #fff; flex: none; }
.fun { margin-top: 20px; margin-left: 2px; }
.vert { writing-mode: vertical-rl; font-weight: 600; font-size: 17.300px; line-height: 20px; align-self: flex-start; flex: none; }
.filters .vert { margin: 11px 0 0 -3px; }
.tabs { height: 44px; background: #f3f2f1; display: flex; font-size: 15.200px; }
.mode { width: 30px; margin-left: 13px; padding: 9px 0 0 1px; }
.bar { display: block; width: 30px; height: 3px; border-radius: 2px; margin: 7px 0 0 -1px; background: #117865; }
.ph { margin: 6px 0 0 31px; }
.la { margin: 15px 0 0 26px; }
.ra { margin: 15px 0 0 22px; }
.pg { background: #fff; height: 44px; line-height: 44px; border-right: 1px solid #c8c6c4; padding-left: 25px; flex: none; }
.p1 { width: 153px; margin-left: 8px; border-left: 1px solid #c8c6c4; border-bottom: 5px solid #117865; font-weight: 600; }
.p2 { width: 180px; padding-left: 24px; }
.p3 { width: 245px; border-right: 0; }
.add { width: 49px; background: linear-gradient(#fff, #fff) center 14px / 3px 13px no-repeat, linear-gradient(#fff, #fff) center 19px / 13px 3px no-repeat, #117865; flex: none; }

.viz { width: 43px; background: #f3f2f1; border-left: 1px solid #e1dfdd; padding: 17px 0 0 13px; flex: none; display: flex; flex-direction: column; }
.viz .vert { margin: 16px 0 0 -4px; }
.data { flex: 1; background: #f3f2f1; border-left: 1px solid #e1dfdd; font-size: 15.300px; }
.dhead { display: flex; align-items: center; justify-content: space-between; height: 49px; padding: 0 10px 0 10px; font-size: 18px; font-weight: 600; }
.dhead b { font-weight: 600; }
.find { margin: 8px 0 0 5px; width: 215px; height: 31px; border: 1px solid #c8c6c4; border-bottom-color: #605e5c; border-radius: 4px; background: #fff; display: flex; align-items: center; padding-left: 14px; gap: 9px; color: #605e5c; font-size: 16.500px; }
.find svg { margin-top: -2px; }
.row { height: 30px; display: flex; align-items: center; line-height: 30px; }
.root { margin-top: 10px; padding-left: 16px; }
.root svg:nth-child(2) { margin: 0 7px 0 4px; }
.exp { width: 55px; padding-left: 38px; flex: none; }
.box { width: 15px; height: 15px; border: 1px solid #797775; border-radius: 2px; background: #f8f8f7; flex: none; }
.kind { width: 32px; padding-left: 10px; flex: none; }

.status { height: 30px; flex: none; background: #f3f2f1; border-top: 1px solid #e1dfdd; border-bottom: 1.500px solid #000; display: flex; justify-content: space-between; font-size: 15px; color: #3b3a39; }
.count { margin: 5px 0 0 5px; line-height: 21px; align-self: flex-start; }
.zoom { display: flex; align-items: center; color: #605e5c; padding: 0 21px 0 0; }
.minus { width: 6px; height: 2px; background: #605e5c; margin-right: 6px; }
.track { width: 125px; height: 14px; display: flex; align-items: center; background: linear-gradient(#605e5c, #605e5c) 0 7px / 100% 1px no-repeat; }
.thumb { width: 5px; height: 14px; background: #605e5c; margin-left: 52px; }
.tick { width: 1px; height: 8px; background: #605e5c; margin-left: 5px; }
.plus { width: 10px; height: 10px; margin: 0 16px 0 7px; background: linear-gradient(#605e5c, #605e5c) 0 4px / 10px 2px no-repeat, linear-gradient(#605e5c, #605e5c) 4px 0 / 2px 10px no-repeat; }
.zoom span { width: 29px; margin-right: 23px; }

.taskbar { height: 60px; flex: none; background: linear-gradient(90deg, #e4e7e7, #dfe4e7 40%, #dfe3e7 75%, #e6e9e7); display: flex; }
.wid { margin: 16px 0 0 26px; }
.start { margin: 16px 0 0 447px; }
.pill { margin: 10px 0 0 17px; width: 273px; height: 39px; border-radius: 20px; background: #f6f8f8; border: 1px solid #cfd3d5; display: flex; align-items: center; padding-left: 13px; font-size: 17.300px; color: #5b5b5b; flex: none; }
.pill span { width: 52px; margin: 2px 0 0 13px; line-height: 24px; }
.tem { margin: 3px 0 0 110px; }
.apps { display: flex; margin-left: 7px; gap: 7.100px; padding-top: 6px; flex: none; }
.app { width: 48px; height: 48px; display: flex; align-items: center; justify-content: center; position: relative; border-radius: 5px; flex: none; padding-left: 1px; }
.app.front { background: #f3f6f9; box-shadow: 0 0 1px rgba(0, 0, 0, .3); }
.app.idle::after, .app.front::after { content: ""; position: absolute; bottom: 0; left: 20px; width: 8px; height: 4px; border-radius: 2px; background: #85888b; }
.app.front::after { left: 14px; width: 20px; background: #0a78d2; }
.badge { position: absolute; right: 1px; top: 3px; width: 20px; height: 20px; border-radius: 50%; background: #0a78d2; color: #fff; font-size: 14px; line-height: 20px; text-align: center; }
.face { position: absolute; right: 2px; top: 3px; }
.tray { margin-left: auto; display: flex; align-items: flex-start; padding-right: 24px; font-size: 15.200px; color: #1b1b1b; }
.tray > svg:first-child { margin-top: 25px; }
.cl { margin: 22px 0 0 23px; }
.lang { width: 30px; margin: 10px 0 0 22px; display: flex; flex-direction: column; align-items: center; line-height: 20px; }
.wf { margin: 22px 0 0 22px; }
.sd { margin: 21px 0 0 9px; }
.bt { margin: 23px 0 0 9px; }
.clock { width: 78px; margin: 9px 0 0 20px; display: flex; flex-direction: column; align-items: flex-end; line-height: 20px; }
</style>
